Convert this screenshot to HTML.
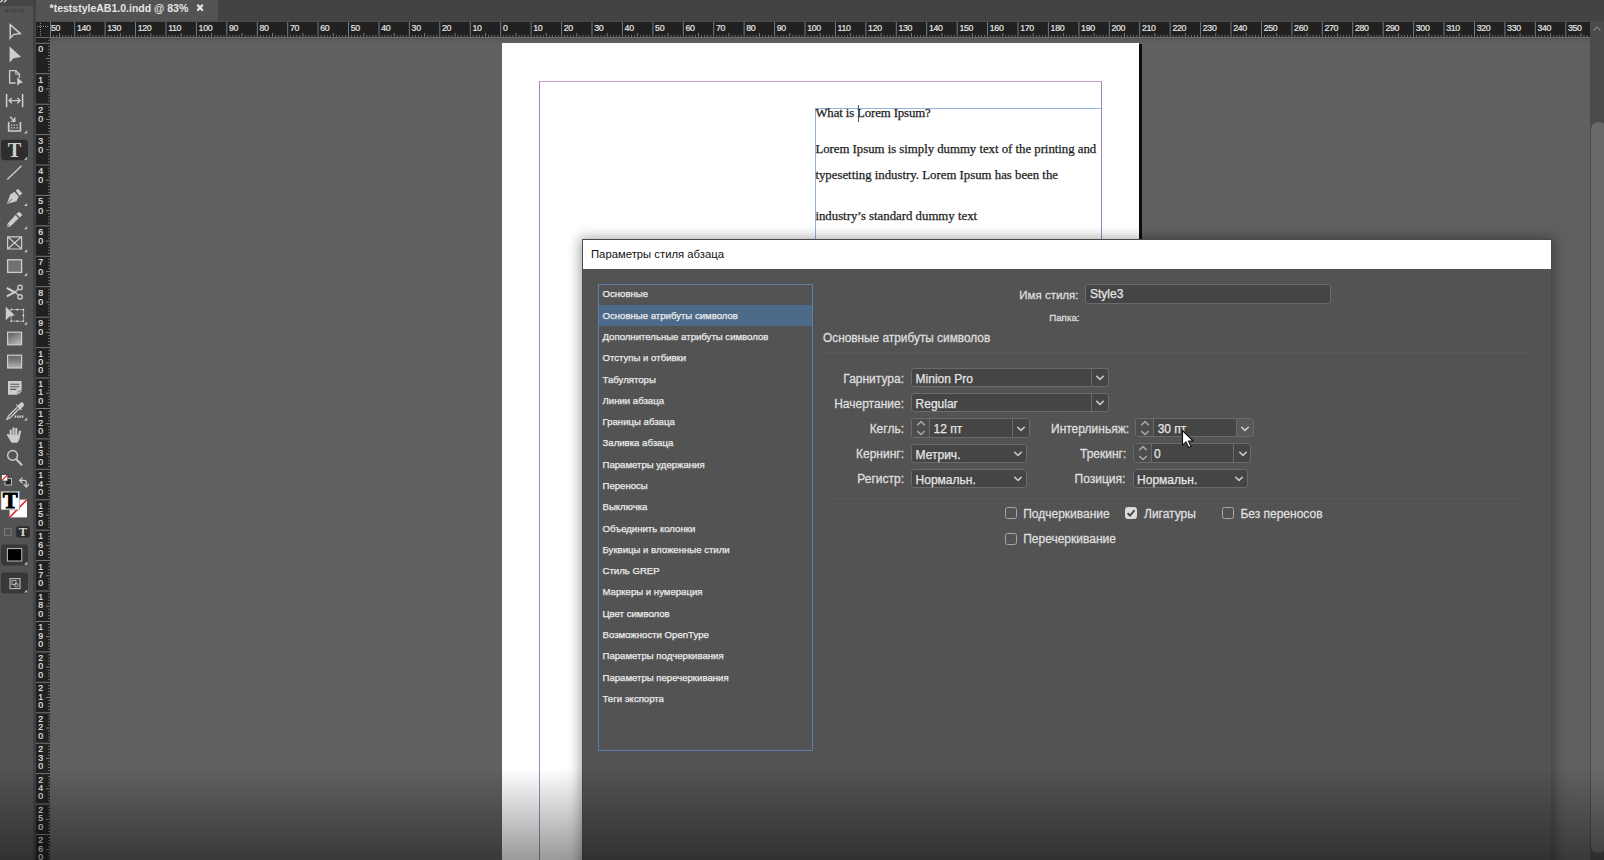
<!DOCTYPE html>
<html lang="ru">
<head>
<meta charset="utf-8">
<title>InDesign</title>
<style>
*{box-sizing:border-box}
html,body{margin:0;padding:0}
body{width:1604px;height:860px;position:relative;overflow:hidden;background:#606060;font-family:"Liberation Sans",sans-serif;color:#dcdcdc}
.abs{position:absolute}
#topbar{left:0;top:0;width:1604px;height:20.5px;background:#434343}
#topstrip{left:33px;top:20.5px;width:1571px;height:1.5px;background:#4b4b4b}
#tab{left:36px;top:0;width:182.4px;height:20.8px;background:#535353}
#tabtxt{left:49.6px;top:1.4px;font-weight:bold;font-size:10.5px;line-height:15px;color:#e4e4e4;white-space:nowrap}
#tabx{left:196.4px;top:.9px;font-weight:bold;font-size:12px;line-height:15px;color:#eee;-webkit-text-stroke:.5px #eee}
#tools{left:0;top:0;width:33px;height:860px;background:#535353}
#toolhead{left:0;top:0;width:33px;height:5.5px;background:#454545}
#toolsep{left:33px;top:0;width:3px;height:860px;background:#434343}
#hr{left:36px;top:22px;width:1554px;height:15px;background:#212121}
#hrline{left:36px;top:37px;width:1554px;height:1px;background:#6c6c6c}
#vr{left:36px;top:38px;width:14px;height:822px;background:#212121}
#rulers{left:0;top:0;width:1604px;height:860px}
#rulers text{font-family:"Liberation Sans",sans-serif;font-size:8.8px;fill:#e4e4e4;stroke:#e4e4e4;stroke-width:.2px;letter-spacing:-0.35px}
#sbar{left:1590px;top:22px;width:14px;height:838px;background:#4a4a4a}
#sthumb{left:1591.3px;top:122px;width:14.5px;height:731px;background:#696969;border-radius:7px}
#page{left:502px;top:43.3px;width:637.3px;height:817px;background:#fff}
#pageshadow{left:1139.3px;top:44px;width:3px;height:816px;background:#0d0d0d}
.mg{background:#cf96cf}
.fr{background:#93b2df}
.pt{font-family:"Liberation Serif",serif;font-size:12.8px;color:#1d1d1d;-webkit-text-stroke:.25px #1d1d1d;white-space:nowrap;line-height:16px}
#dlg{left:582px;top:239px;width:969.5px;height:640px;background:#535353;box-shadow:0 1px 12px 2px rgba(0,0,0,.36);border:1px solid #4a4a4a}
#dlgtitle{left:0;top:0;width:100%;height:29px;background:#fff}
#dlgtitle span{position:absolute;left:8px;top:6px;font-size:11.3px;line-height:16px;color:#111;white-space:nowrap}
#list{left:597.5px;top:283.5px;width:215.6px;height:467.6px;background:transparent;border:1.8px solid #5b7fa9}
.li{position:absolute;left:4px;font-size:9.6px;line-height:14px;color:#ececec;white-space:nowrap;-webkit-text-stroke:.25px #ececec}
#lisel{left:599px;top:304.6px;width:212.6px;height:21.4px;background:#4d6a89}
.lab{position:absolute;font-size:12px;line-height:16px;color:#dedede;white-space:nowrap;text-align:right;-webkit-text-stroke:.3px #dedede}
.fld{position:absolute;height:19px;background:#454545;border:1px solid #6a6a6a;border-radius:3px}
.fld span{position:absolute;left:3.6px;top:1.4px;font-size:12px;line-height:16px;color:#e6e6e6;white-space:nowrap;-webkit-text-stroke:.25px #e6e6e6}
.fld i{position:absolute;top:0;bottom:0;width:1px;background:#6a6a6a}
.seg{position:absolute;top:0;bottom:0;background:#4d4d4d}
.cb{position:absolute;width:12px;height:12px;border:1px solid #a6a6a6;border-radius:2.5px;background:transparent}
.cbl{position:absolute;font-size:12px;line-height:16px;color:#dedede;white-space:nowrap;-webkit-text-stroke:.3px #dedede}
.hrl{position:absolute;height:1px;background:#595959}
#fade{left:0;top:768px;width:1604px;height:92px;background:linear-gradient(to bottom,rgba(0,0,0,0) 0,rgba(0,0,0,.4) 100%)}
</style>
</head>
<body>
<!-- canvas -->
<div class="abs" id="page"></div>
<div class="abs" id="pageshadow"></div>
<!-- margin guides -->
<div class="abs mg" style="left:539px;top:81px;width:562.5px;height:1px"></div>
<div class="abs mg" style="left:538.7px;top:81px;width:1px;height:779px;background:#a086bd"></div>
<div class="abs mg" style="left:1100.6px;top:81px;width:1px;height:779px;background:#a086bd"></div>
<!-- text frame -->
<div class="abs fr" style="left:815.2px;top:108.2px;width:286px;height:1px"></div>
<div class="abs fr" style="left:815.2px;top:108.2px;width:1px;height:140px"></div>
<div class="abs pt" style="left:815.4px;top:105px;letter-spacing:-0.12px">What is Lorem Ipsum?</div>
<div class="abs" style="left:857.5px;top:105.4px;width:1.3px;height:17px;background:#555"></div>
<div class="abs pt" style="left:815.4px;top:140.5px;letter-spacing:-0.02px">Lorem Ipsum is simply dummy text of the printing and</div>
<div class="abs pt" style="left:815.4px;top:167px">typesetting industry. Lorem Ipsum has been the</div>
<div class="abs pt" style="left:815.4px;top:208.3px">industry’s standard dummy text</div>

<!--DIALOG_START-->
<div class="abs" id="dlg"><div class="abs" id="dlgtitle"><span>Параметры стиля абзаца</span></div></div>
<!-- category list -->
<div class="abs" id="list"></div>
<div class="abs" id="lisel"></div>
<div class="abs" id="litems" style="left:598.5px;top:0;width:214px;height:760px">
<div class="li" style="top:287.3px">Основные</div>
<div class="li" style="top:308.6px">Основные атрибуты символов</div>
<div class="li" style="top:329.9px">Дополнительные атрибуты символов</div>
<div class="li" style="top:351.2px">Отступы и отбивки</div>
<div class="li" style="top:372.5px">Табуляторы</div>
<div class="li" style="top:393.8px">Линии абзаца</div>
<div class="li" style="top:415.1px">Границы абзаца</div>
<div class="li" style="top:436.4px">Заливка абзаца</div>
<div class="li" style="top:457.7px">Параметры удержания</div>
<div class="li" style="top:479px">Переносы</div>
<div class="li" style="top:500.2px">Выключка</div>
<div class="li" style="top:521.5px">Объединить колонки</div>
<div class="li" style="top:542.8px">Буквицы и вложенные стили</div>
<div class="li" style="top:564.1px">Стиль GREP</div>
<div class="li" style="top:585.4px">Маркеры и нумерация</div>
<div class="li" style="top:606.7px">Цвет символов</div>
<div class="li" style="top:628px">Возможности OpenType</div>
<div class="li" style="top:649.3px">Параметры подчеркивания</div>
<div class="li" style="top:670.6px">Параметры перечеркивания</div>
<div class="li" style="top:691.9px">Теги экспорта</div>
</div>
<!-- style name -->
<div class="lab" style="left:978.5px;width:100px;top:286.6px;font-size:11.5px">Имя стиля:</div>
<div class="fld" style="left:1085px;top:284px;width:246.4px;height:19.5px"><span style="top:1.3px;left:4px">Style3</span></div>
<div class="lab" style="left:979.6px;width:100px;top:310.5px;font-size:9.8px;line-height:14px">Папка:</div>
<div class="lab" style="left:823px;top:330px;text-align:left;font-size:11.85px">Основные атрибуты символов</div>
<div class="hrl" style="left:823px;top:351.5px;width:707px"></div>
<!-- left column -->
<div class="lab" style="left:804px;width:100px;top:370.8px">Гарнитура:</div>
<div class="fld" style="left:911px;top:368px;width:198px;height:19.4px"><span style="top:1.8px">Minion Pro</span><i style="left:179px"></i><svg class="abs" style="left:183px;top:5.6px" width="10" height="7" viewBox="0 0 10 7"><path d="M1.3 0.9L5 4.4L8.7 0.9" fill="none" stroke="#c8c8c8" stroke-width="1.45"/></svg></div>
<div class="lab" style="left:804px;width:100px;top:395.9px">Начертание:</div>
<div class="fld" style="left:911px;top:393px;width:198px;height:19.4px"><span style="top:2px">Regular</span><i style="left:179px"></i><svg class="abs" style="left:183px;top:5.8px" width="10" height="7" viewBox="0 0 10 7"><path d="M1.3 0.9L5 4.4L8.7 0.9" fill="none" stroke="#c8c8c8" stroke-width="1.45"/></svg></div>
<div class="lab" style="left:804px;width:100px;top:421px">Кегль:</div>
<div class="fld" style="left:911px;top:418.2px;width:119px;height:19.5px"><div class="seg" style="left:0;width:17px;border-radius:2px 0 0 2px"></div><i style="left:17px"></i><svg class="abs" style="left:4px;top:1px" width="10" height="17" viewBox="0 0 10 17"><path d="M1.2 5.2L5 1.6L8.8 5.2M1.2 11L5 14.6L8.8 11" fill="none" stroke="#a9a9a9" stroke-width="1.45"/></svg><span style="left:21.6px;top:1.6px">12 пт</span><i style="left:100px"></i><svg class="abs" style="left:104px;top:6.5px" width="10" height="7" viewBox="0 0 10 7"><path d="M1.3 0.9L5 4.4L8.7 0.9" fill="none" stroke="#c8c8c8" stroke-width="1.45"/></svg></div>
<div class="lab" style="left:804px;width:100px;top:446.2px">Кернинг:</div>
<div class="fld" style="left:911px;top:443.8px;width:116px;height:19.5px"><span style="top:1.8px">Метрич.</span><svg class="abs" style="left:101px;top:6.4px" width="10" height="7" viewBox="0 0 10 7"><path d="M1.3 0.9L5 4.4L8.7 0.9" fill="none" stroke="#c8c8c8" stroke-width="1.45"/></svg></div>
<div class="lab" style="left:804px;width:100px;top:471.3px">Регистр:</div>
<div class="fld" style="left:911px;top:469px;width:116px;height:19.3px"><span style="top:1.6px">Нормальн.</span><svg class="abs" style="left:101px;top:6.2px" width="10" height="7" viewBox="0 0 10 7"><path d="M1.3 0.9L5 4.4L8.7 0.9" fill="none" stroke="#c8c8c8" stroke-width="1.45"/></svg></div>
<!-- right column -->
<div class="lab" style="left:1029px;width:100px;top:421.4px">Интерлиньяж:</div>
<div class="fld" style="left:1135.3px;top:418px;width:118.3px;height:19.4px"><div class="seg" style="left:0;width:17px;border-radius:2px 0 0 2px"></div><i style="left:17px"></i><svg class="abs" style="left:4px;top:1px" width="10" height="17" viewBox="0 0 10 17"><path d="M1.2 5.2L5 1.6L8.8 5.2M1.2 11L5 14.6L8.8 11" fill="none" stroke="#a9a9a9" stroke-width="1.45"/></svg><span style="left:21.4px;top:2.2px">30 пт</span><div class="seg" style="left:100px;right:0;background:#595959;border-radius:0 2px 2px 0"></div><i style="left:99.5px"></i><svg class="abs" style="left:104px;top:6.5px" width="10" height="7" viewBox="0 0 10 7"><path d="M1.3 0.9L5 4.4L8.7 0.9" fill="none" stroke="#c8c8c8" stroke-width="1.45"/></svg></div>
<div class="lab" style="left:1026.3px;width:100px;top:446.3px">Трекинг:</div>
<div class="fld" style="left:1132.5px;top:443.2px;width:118.3px;height:19.7px"><div class="seg" style="left:0;width:17px;border-radius:2px 0 0 2px"></div><i style="left:17px"></i><svg class="abs" style="left:4px;top:1px" width="10" height="17" viewBox="0 0 10 17"><path d="M1.2 5.2L5 1.6L8.8 5.2M1.2 11L5 14.6L8.8 11" fill="none" stroke="#a9a9a9" stroke-width="1.45"/></svg><span style="left:20.6px;top:1.7px">0</span><i style="left:99.6px"></i><svg class="abs" style="left:104.5px;top:6.5px" width="10" height="7" viewBox="0 0 10 7"><path d="M1.3 0.9L5 4.4L8.7 0.9" fill="none" stroke="#c8c8c8" stroke-width="1.45"/></svg></div>
<div class="lab" style="left:1025.4px;width:100px;top:471px">Позиция:</div>
<div class="fld" style="left:1132.5px;top:469.3px;width:115.5px;height:18.6px"><span>Нормальн.</span><svg class="abs" style="left:100.5px;top:6px" width="10" height="7" viewBox="0 0 10 7"><path d="M1.3 0.9L5 4.4L8.7 0.9" fill="none" stroke="#c8c8c8" stroke-width="1.45"/></svg></div>
<div class="hrl" style="left:832px;top:497.5px;width:690px"></div>
<!-- checkboxes -->
<div class="cb" style="left:1004.5px;top:507.4px"></div><div class="cbl" style="left:1023.2px;top:506px">Подчеркивание</div>
<div class="cb" style="left:1125.4px;top:507.4px;background:#dcdcdc;border-color:#dcdcdc"></div>
<svg class="abs" style="left:1125.4px;top:507.4px" width="12" height="12" viewBox="0 0 12 12"><path d="M2.6 6.2L5 8.7L9.5 3.2" fill="none" stroke="#3d3d3d" stroke-width="1.8"/></svg>
<div class="cbl" style="left:1144px;top:506px">Лигатуры</div>
<div class="cb" style="left:1222.2px;top:507.4px"></div><div class="cbl" style="left:1240.4px;top:506px">Без переносов</div>
<div class="cb" style="left:1004.5px;top:532.7px"></div><div class="cbl" style="left:1023.2px;top:531.3px">Перечеркивание</div>
<!-- mouse cursor -->
<svg class="abs" style="left:1181.3px;top:429px" width="14" height="20" viewBox="0 0 14 20"><path d="M1.5 1.5V16.2L5 12.9L7.6 18.6L10 17.5L7.4 12H12.2Z" fill="#fff" stroke="#111" stroke-width="1.1" stroke-linejoin="round"/></svg>
<!--DIALOG_END-->

<!-- chrome -->
<div class="abs" id="topbar"></div>
<div class="abs" id="topstrip"></div>
<div class="abs" id="tab"></div>
<div class="abs" id="tabtxt">*teststyleAB1.0.indd @ 83%</div>
<div class="abs" id="tabx">×</div>
<div class="abs" id="hr"></div>
<div class="abs" id="hrline"></div>
<div class="abs" id="vr"></div>
<div class="abs" style="left:50px;top:38px;width:1540px;height:4px;background:linear-gradient(to bottom,rgba(0,0,0,.09),rgba(0,0,0,.05) 60%,rgba(0,0,0,0))"></div>
<div class="abs" id="sbar"></div>
<div class="abs" id="sthumb"></div>
<svg class="abs" id="rulers" width="1604" height="860" viewBox="0 0 1604 860">
<g shape-rendering="auto">
<path d="M53.4 37V35M56.4 37V35M62.5 37V35M65.6 37V35M68.6 37V35M71.6 37V35M77.7 37V35M80.8 37V35M83.8 37V35M86.9 37V35M92.9 37V35M96.0 37V35M99.0 37V35M102.1 37V35M108.2 37V35M111.2 37V35M114.2 37V35M117.3 37V35M123.4 37V35M126.4 37V35M129.5 37V35M132.5 37V35M138.6 37V35M141.6 37V35M144.7 37V35M147.7 37V35M153.8 37V35M156.8 37V35M159.9 37V35M162.9 37V35M169.0 37V35M172.1 37V35M175.1 37V35M178.1 37V35M184.2 37V35M187.3 37V35M190.3 37V35M193.4 37V35M199.4 37V35M202.5 37V35M205.5 37V35M208.6 37V35M214.7 37V35M217.7 37V35M220.7 37V35M223.8 37V35M229.9 37V35M232.9 37V35M236.0 37V35M239.0 37V35M245.1 37V35M248.1 37V35M251.2 37V35M254.2 37V35M260.3 37V35M263.3 37V35M266.4 37V35M269.4 37V35M275.5 37V35M278.6 37V35M281.6 37V35M284.6 37V35M290.7 37V35M293.8 37V35M296.8 37V35M299.9 37V35M305.9 37V35M309.0 37V35M312.0 37V35M315.1 37V35M321.2 37V35M324.2 37V35M327.2 37V35M330.3 37V35M336.4 37V35M339.4 37V35M342.5 37V35M345.5 37V35M351.6 37V35M354.6 37V35M357.7 37V35M360.7 37V35M366.8 37V35M369.9 37V35M372.9 37V35M375.9 37V35M382.0 37V35M385.1 37V35M388.1 37V35M391.2 37V35M397.2 37V35M400.3 37V35M403.3 37V35M406.4 37V35M412.5 37V35M415.5 37V35M418.5 37V35M421.6 37V35M427.7 37V35M430.7 37V35M433.8 37V35M436.8 37V35M442.9 37V35M445.9 37V35M449.0 37V35M452.0 37V35M458.1 37V35M461.1 37V35M464.2 37V35M467.2 37V35M473.3 37V35M476.4 37V35M479.4 37V35M482.4 37V35M488.5 37V35M491.6 37V35M494.6 37V35M497.7 37V35M503.7 37V35M506.8 37V35M509.8 37V35M512.9 37V35M519.0 37V35M522.0 37V35M525.0 37V35M528.1 37V35M534.2 37V35M537.2 37V35M540.3 37V35M543.3 37V35M549.4 37V35M552.4 37V35M555.5 37V35M558.5 37V35M564.6 37V35M567.6 37V35M570.7 37V35M573.7 37V35M579.8 37V35M582.9 37V35M585.9 37V35M588.9 37V35M595.0 37V35M598.1 37V35M601.1 37V35M604.2 37V35M610.2 37V35M613.3 37V35M616.3 37V35M619.4 37V35M625.5 37V35M628.5 37V35M631.5 37V35M634.6 37V35M640.7 37V35M643.7 37V35M646.8 37V35M649.8 37V35M655.9 37V35M658.9 37V35M662.0 37V35M665.0 37V35M671.1 37V35M674.2 37V35M677.2 37V35M680.2 37V35M686.3 37V35M689.4 37V35M692.4 37V35M695.5 37V35M701.5 37V35M704.6 37V35M707.6 37V35M710.7 37V35M716.8 37V35M719.8 37V35M722.8 37V35M725.9 37V35M732.0 37V35M735.0 37V35M738.1 37V35M741.1 37V35M747.2 37V35M750.2 37V35M753.3 37V35M756.3 37V35M762.4 37V35M765.4 37V35M768.5 37V35M771.5 37V35M777.6 37V35M780.7 37V35M783.7 37V35M786.7 37V35M792.8 37V35M795.9 37V35M798.9 37V35M802.0 37V35M808.0 37V35M811.1 37V35M814.1 37V35M817.2 37V35M823.3 37V35M826.3 37V35M829.3 37V35M832.4 37V35M838.5 37V35M841.5 37V35M844.6 37V35M847.6 37V35M853.7 37V35M856.7 37V35M859.8 37V35M862.8 37V35M868.9 37V35M871.9 37V35M875.0 37V35M878.0 37V35M884.1 37V35M887.2 37V35M890.2 37V35M893.2 37V35M899.3 37V35M902.4 37V35M905.4 37V35M908.5 37V35M914.5 37V35M917.6 37V35M920.6 37V35M923.7 37V35M929.8 37V35M932.8 37V35M935.8 37V35M938.9 37V35M945.0 37V35M948.0 37V35M951.1 37V35M954.1 37V35M960.2 37V35M963.2 37V35M966.3 37V35M969.3 37V35M975.4 37V35M978.5 37V35M981.5 37V35M984.5 37V35M990.6 37V35M993.7 37V35M996.7 37V35M999.8 37V35M1005.8 37V35M1008.9 37V35M1011.9 37V35M1015.0 37V35M1021.1 37V35M1024.1 37V35M1027.1 37V35M1030.2 37V35M1036.3 37V35M1039.3 37V35M1042.4 37V35M1045.4 37V35M1051.5 37V35M1054.5 37V35M1057.6 37V35M1060.6 37V35M1066.7 37V35M1069.7 37V35M1072.8 37V35M1075.8 37V35M1081.9 37V35M1085.0 37V35M1088.0 37V35M1091.0 37V35M1097.1 37V35M1100.2 37V35M1103.2 37V35M1106.3 37V35M1112.3 37V35M1115.4 37V35M1118.4 37V35M1121.5 37V35M1127.6 37V35M1130.6 37V35M1133.6 37V35M1136.7 37V35M1142.8 37V35M1145.8 37V35M1148.9 37V35M1151.9 37V35M1158.0 37V35M1161.0 37V35M1164.1 37V35M1167.1 37V35M1173.2 37V35M1176.2 37V35M1179.3 37V35M1182.3 37V35M1188.4 37V35M1191.5 37V35M1194.5 37V35M1197.5 37V35M1203.6 37V35M1206.7 37V35M1209.7 37V35M1212.8 37V35M1218.8 37V35M1221.9 37V35M1224.9 37V35M1228.0 37V35M1234.1 37V35M1237.1 37V35M1240.1 37V35M1243.2 37V35M1249.3 37V35M1252.3 37V35M1255.4 37V35M1258.4 37V35M1264.5 37V35M1267.5 37V35M1270.6 37V35M1273.6 37V35M1279.7 37V35M1282.8 37V35M1285.8 37V35M1288.8 37V35M1294.9 37V35M1298.0 37V35M1301.0 37V35M1304.1 37V35M1310.1 37V35M1313.2 37V35M1316.2 37V35M1319.3 37V35M1325.4 37V35M1328.4 37V35M1331.4 37V35M1334.5 37V35M1340.6 37V35M1343.6 37V35M1346.7 37V35M1349.7 37V35M1355.8 37V35M1358.8 37V35M1361.9 37V35M1364.9 37V35M1371.0 37V35M1374.0 37V35M1377.1 37V35M1380.1 37V35M1386.2 37V35M1389.3 37V35M1392.3 37V35M1395.3 37V35M1401.4 37V35M1404.5 37V35M1407.5 37V35M1410.6 37V35M1416.6 37V35M1419.7 37V35M1422.7 37V35M1425.8 37V35M1431.9 37V35M1434.9 37V35M1437.9 37V35M1441.0 37V35M1447.1 37V35M1450.1 37V35M1453.2 37V35M1456.2 37V35M1462.3 37V35M1465.3 37V35M1468.4 37V35M1471.4 37V35M1477.5 37V35M1480.5 37V35M1483.6 37V35M1486.6 37V35M1492.7 37V35M1495.8 37V35M1498.8 37V35M1501.8 37V35M1507.9 37V35M1511.0 37V35M1514.0 37V35M1517.1 37V35M1523.1 37V35M1526.2 37V35M1529.2 37V35M1532.3 37V35M1538.4 37V35M1541.4 37V35M1544.4 37V35M1547.5 37V35M1553.6 37V35M1556.6 37V35M1559.7 37V35M1562.7 37V35M1568.8 37V35M1571.8 37V35M1574.9 37V35M1577.9 37V35M1584.0 37V35M1587.1 37V35" stroke="#6c6c6c" stroke-width="1"/>
<path d="M59.5 37V33M89.9 37V33M120.3 37V33M150.8 37V33M181.2 37V33M211.6 37V33M242.0 37V33M272.5 37V33M302.9 37V33M333.3 37V33M363.8 37V33M394.2 37V33M424.6 37V33M455.1 37V33M485.5 37V33M515.9 37V33M546.3 37V33M576.8 37V33M607.2 37V33M637.6 37V33M668.1 37V33M698.5 37V33M728.9 37V33M759.4 37V33M789.8 37V33M820.2 37V33M850.6 37V33M881.1 37V33M911.5 37V33M941.9 37V33M972.4 37V33M1002.8 37V33M1033.2 37V33M1063.7 37V33M1094.1 37V33M1124.5 37V33M1154.9 37V33M1185.4 37V33M1215.8 37V33M1246.2 37V33M1276.7 37V33M1307.1 37V33M1337.5 37V33M1368.0 37V33M1398.4 37V33M1428.8 37V33M1459.2 37V33M1489.7 37V33M1520.1 37V33M1550.5 37V33M1581.0 37V33" stroke="#7a7a7a" stroke-width="1"/>
<path d="M74.7 37V22M105.1 37V22M135.5 37V22M166.0 37V22M196.4 37V22M226.8 37V22M257.3 37V22M287.7 37V22M318.1 37V22M348.5 37V22M379.0 37V22M409.4 37V22M439.8 37V22M470.3 37V22M500.7 37V22M531.1 37V22M561.6 37V22M592.0 37V22M622.4 37V22M652.9 37V22M683.3 37V22M713.7 37V22M744.1 37V22M774.6 37V22M805.0 37V22M835.4 37V22M865.9 37V22M896.3 37V22M926.7 37V22M957.2 37V22M987.6 37V22M1018.0 37V22M1048.4 37V22M1078.9 37V22M1109.3 37V22M1139.7 37V22M1170.2 37V22M1200.6 37V22M1231.0 37V22M1261.5 37V22M1291.9 37V22M1322.3 37V22M1352.7 37V22M1383.2 37V22M1413.6 37V22M1444.0 37V22M1474.5 37V22M1504.9 37V22M1535.3 37V22M1565.8 37V22" stroke="#7a7a7a" stroke-width="1"/>
<text x="46.4" y="30.9">150</text>
<text x="76.9" y="30.9">140</text>
<text x="107.3" y="30.9">130</text>
<text x="137.7" y="30.9">120</text>
<text x="168.2" y="30.9">110</text>
<text x="198.6" y="30.9">100</text>
<text x="229.0" y="30.9">90</text>
<text x="259.5" y="30.9">80</text>
<text x="289.9" y="30.9">70</text>
<text x="320.3" y="30.9">60</text>
<text x="350.7" y="30.9">50</text>
<text x="381.2" y="30.9">40</text>
<text x="411.6" y="30.9">30</text>
<text x="442.0" y="30.9">20</text>
<text x="472.5" y="30.9">10</text>
<text x="502.9" y="30.9">0</text>
<text x="533.3" y="30.9">10</text>
<text x="563.8" y="30.9">20</text>
<text x="594.2" y="30.9">30</text>
<text x="624.6" y="30.9">40</text>
<text x="655.1" y="30.9">50</text>
<text x="685.5" y="30.9">60</text>
<text x="715.9" y="30.9">70</text>
<text x="746.3" y="30.9">80</text>
<text x="776.8" y="30.9">90</text>
<text x="807.2" y="30.9">100</text>
<text x="837.6" y="30.9">110</text>
<text x="868.1" y="30.9">120</text>
<text x="898.5" y="30.9">130</text>
<text x="928.9" y="30.9">140</text>
<text x="959.4" y="30.9">150</text>
<text x="989.8" y="30.9">160</text>
<text x="1020.2" y="30.9">170</text>
<text x="1050.6" y="30.9">180</text>
<text x="1081.1" y="30.9">190</text>
<text x="1111.5" y="30.9">200</text>
<text x="1141.9" y="30.9">210</text>
<text x="1172.4" y="30.9">220</text>
<text x="1202.8" y="30.9">230</text>
<text x="1233.2" y="30.9">240</text>
<text x="1263.7" y="30.9">250</text>
<text x="1294.1" y="30.9">260</text>
<text x="1324.5" y="30.9">270</text>
<text x="1354.9" y="30.9">280</text>
<text x="1385.4" y="30.9">290</text>
<text x="1415.8" y="30.9">300</text>
<text x="1446.2" y="30.9">310</text>
<text x="1476.7" y="30.9">320</text>
<text x="1507.1" y="30.9">330</text>
<text x="1537.5" y="30.9">340</text>
<text x="1568.0" y="30.9">350</text>
<path d="M50 40.3H48M50 46.3H48M50 49.4H48M50 52.4H48M50 55.5H48M50 61.6H48M50 64.6H48M50 67.6H48M50 70.7H48M50 76.8H48M50 79.8H48M50 82.9H48M50 85.9H48M50 92.0H48M50 95.0H48M50 98.1H48M50 101.1H48M50 107.2H48M50 110.2H48M50 113.3H48M50 116.3H48M50 122.4H48M50 125.5H48M50 128.5H48M50 131.5H48M50 137.6H48M50 140.7H48M50 143.7H48M50 146.8H48M50 152.8H48M50 155.9H48M50 158.9H48M50 162.0H48M50 168.1H48M50 171.1H48M50 174.1H48M50 177.2H48M50 183.3H48M50 186.3H48M50 189.4H48M50 192.4H48M50 198.5H48M50 201.5H48M50 204.6H48M50 207.6H48M50 213.7H48M50 216.8H48M50 219.8H48M50 222.8H48M50 228.9H48M50 232.0H48M50 235.0H48M50 238.1H48M50 244.1H48M50 247.2H48M50 250.2H48M50 253.3H48M50 259.4H48M50 262.4H48M50 265.4H48M50 268.5H48M50 274.6H48M50 277.6H48M50 280.7H48M50 283.7H48M50 289.8H48M50 292.8H48M50 295.9H48M50 298.9H48M50 305.0H48M50 308.0H48M50 311.1H48M50 314.1H48M50 320.2H48M50 323.3H48M50 326.3H48M50 329.3H48M50 335.4H48M50 338.5H48M50 341.5H48M50 344.6H48M50 350.6H48M50 353.7H48M50 356.7H48M50 359.8H48M50 365.9H48M50 368.9H48M50 371.9H48M50 375.0H48M50 381.1H48M50 384.1H48M50 387.2H48M50 390.2H48M50 396.3H48M50 399.3H48M50 402.4H48M50 405.4H48M50 411.5H48M50 414.5H48M50 417.6H48M50 420.6H48M50 426.7H48M50 429.8H48M50 432.8H48M50 435.8H48M50 441.9H48M50 445.0H48M50 448.0H48M50 451.1H48M50 457.1H48M50 460.2H48M50 463.2H48M50 466.3H48M50 472.4H48M50 475.4H48M50 478.4H48M50 481.5H48M50 487.6H48M50 490.6H48M50 493.7H48M50 496.7H48M50 502.8H48M50 505.8H48M50 508.9H48M50 511.9H48M50 518.0H48M50 521.1H48M50 524.1H48M50 527.1H48M50 533.2H48M50 536.3H48M50 539.3H48M50 542.4H48M50 548.4H48M50 551.5H48M50 554.5H48M50 557.6H48M50 563.7H48M50 566.7H48M50 569.7H48M50 572.8H48M50 578.9H48M50 581.9H48M50 585.0H48M50 588.0H48M50 594.1H48M50 597.1H48M50 600.2H48M50 603.2H48M50 609.3H48M50 612.3H48M50 615.4H48M50 618.4H48M50 624.5H48M50 627.6H48M50 630.6H48M50 633.6H48M50 639.7H48M50 642.8H48M50 645.8H48M50 648.9H48M50 654.9H48M50 658.0H48M50 661.0H48M50 664.1H48M50 670.2H48M50 673.2H48M50 676.2H48M50 679.3H48M50 685.4H48M50 688.4H48M50 691.5H48M50 694.5H48M50 700.6H48M50 703.6H48M50 706.7H48M50 709.7H48M50 715.8H48M50 718.8H48M50 721.9H48M50 724.9H48M50 731.0H48M50 734.1H48M50 737.1H48M50 740.1H48M50 746.2H48M50 749.3H48M50 752.3H48M50 755.4H48M50 761.4H48M50 764.5H48M50 767.5H48M50 770.6H48M50 776.7H48M50 779.7H48M50 782.7H48M50 785.8H48M50 791.9H48M50 794.9H48M50 798.0H48M50 801.0H48M50 807.1H48M50 810.1H48M50 813.2H48M50 816.2H48M50 822.3H48M50 825.4H48M50 828.4H48M50 831.4H48M50 837.5H48M50 840.6H48M50 843.6H48M50 846.7H48M50 852.7H48M50 855.8H48M50 858.8H48M50 861.9H48" stroke="#6c6c6c" stroke-width="1"/>
<path d="M50 58.5H46M50 88.9H46M50 119.4H46M50 149.8H46M50 180.2H46M50 210.7H46M50 241.1H46M50 271.5H46M50 302.0H46M50 332.4H46M50 362.8H46M50 393.2H46M50 423.7H46M50 454.1H46M50 484.5H46M50 515.0H46M50 545.4H46M50 575.8H46M50 606.3H46M50 636.7H46M50 667.1H46M50 697.5H46M50 728.0H46M50 758.4H46M50 788.8H46M50 819.3H46M50 849.7H46" stroke="#7a7a7a" stroke-width="1"/>
<path d="M50 43.3H36M50 73.7H36M50 104.2H36M50 134.6H36M50 165.0H36M50 195.4H36M50 225.9H36M50 256.3H36M50 286.7H36M50 317.2H36M50 347.6H36M50 378.0H36M50 408.5H36M50 438.9H36M50 469.3H36M50 499.8H36M50 530.2H36M50 560.6H36M50 591.0H36M50 621.5H36M50 651.9H36M50 682.3H36M50 712.8H36M50 743.2H36M50 773.6H36M50 804.0H36M50 834.5H36" stroke="#7a7a7a" stroke-width="1"/>
<text x="40.6" y="52.2" text-anchor="middle">0</text>
<text x="40.6" y="82.6" text-anchor="middle">1</text>
<text x="40.6" y="91.9" text-anchor="middle">0</text>
<text x="40.6" y="113.1" text-anchor="middle">2</text>
<text x="40.6" y="122.4" text-anchor="middle">0</text>
<text x="40.6" y="143.5" text-anchor="middle">3</text>
<text x="40.6" y="152.8" text-anchor="middle">0</text>
<text x="40.6" y="173.9" text-anchor="middle">4</text>
<text x="40.6" y="183.2" text-anchor="middle">0</text>
<text x="40.6" y="204.3" text-anchor="middle">5</text>
<text x="40.6" y="213.7" text-anchor="middle">0</text>
<text x="40.6" y="234.8" text-anchor="middle">6</text>
<text x="40.6" y="244.1" text-anchor="middle">0</text>
<text x="40.6" y="265.2" text-anchor="middle">7</text>
<text x="40.6" y="274.5" text-anchor="middle">0</text>
<text x="40.6" y="295.6" text-anchor="middle">8</text>
<text x="40.6" y="304.9" text-anchor="middle">0</text>
<text x="40.6" y="326.1" text-anchor="middle">9</text>
<text x="40.6" y="335.4" text-anchor="middle">0</text>
<text x="40.6" y="356.5" text-anchor="middle">1</text>
<text x="40.6" y="364.9" text-anchor="middle">0</text>
<text x="40.6" y="373.3" text-anchor="middle">0</text>
<text x="40.6" y="386.9" text-anchor="middle">1</text>
<text x="40.6" y="395.3" text-anchor="middle">1</text>
<text x="40.6" y="403.7" text-anchor="middle">0</text>
<text x="40.6" y="417.4" text-anchor="middle">1</text>
<text x="40.6" y="425.8" text-anchor="middle">2</text>
<text x="40.6" y="434.2" text-anchor="middle">0</text>
<text x="40.6" y="447.8" text-anchor="middle">1</text>
<text x="40.6" y="456.2" text-anchor="middle">3</text>
<text x="40.6" y="464.6" text-anchor="middle">0</text>
<text x="40.6" y="478.2" text-anchor="middle">1</text>
<text x="40.6" y="486.6" text-anchor="middle">4</text>
<text x="40.6" y="495.0" text-anchor="middle">0</text>
<text x="40.6" y="508.7" text-anchor="middle">1</text>
<text x="40.6" y="517.1" text-anchor="middle">5</text>
<text x="40.6" y="525.5" text-anchor="middle">0</text>
<text x="40.6" y="539.1" text-anchor="middle">1</text>
<text x="40.6" y="547.5" text-anchor="middle">6</text>
<text x="40.6" y="555.9" text-anchor="middle">0</text>
<text x="40.6" y="569.5" text-anchor="middle">1</text>
<text x="40.6" y="577.9" text-anchor="middle">7</text>
<text x="40.6" y="586.3" text-anchor="middle">0</text>
<text x="40.6" y="599.9" text-anchor="middle">1</text>
<text x="40.6" y="608.3" text-anchor="middle">8</text>
<text x="40.6" y="616.7" text-anchor="middle">0</text>
<text x="40.6" y="630.4" text-anchor="middle">1</text>
<text x="40.6" y="638.8" text-anchor="middle">9</text>
<text x="40.6" y="647.2" text-anchor="middle">0</text>
<text x="40.6" y="660.8" text-anchor="middle">2</text>
<text x="40.6" y="669.2" text-anchor="middle">0</text>
<text x="40.6" y="677.6" text-anchor="middle">0</text>
<text x="40.6" y="691.2" text-anchor="middle">2</text>
<text x="40.6" y="699.6" text-anchor="middle">1</text>
<text x="40.6" y="708.0" text-anchor="middle">0</text>
<text x="40.6" y="721.7" text-anchor="middle">2</text>
<text x="40.6" y="730.1" text-anchor="middle">2</text>
<text x="40.6" y="738.5" text-anchor="middle">0</text>
<text x="40.6" y="752.1" text-anchor="middle">2</text>
<text x="40.6" y="760.5" text-anchor="middle">3</text>
<text x="40.6" y="768.9" text-anchor="middle">0</text>
<text x="40.6" y="782.5" text-anchor="middle">2</text>
<text x="40.6" y="790.9" text-anchor="middle">4</text>
<text x="40.6" y="799.3" text-anchor="middle">0</text>
<text x="40.6" y="812.9" text-anchor="middle">2</text>
<text x="40.6" y="821.3" text-anchor="middle">5</text>
<text x="40.6" y="829.7" text-anchor="middle">0</text>
<text x="40.6" y="843.4" text-anchor="middle">2</text>
<text x="40.6" y="851.8" text-anchor="middle">6</text>
<text x="40.6" y="860.2" text-anchor="middle">0</text>
<text x="40.6" y="873.8" text-anchor="middle">2</text>
<text x="40.6" y="882.2" text-anchor="middle">7</text>
<text x="40.6" y="890.6" text-anchor="middle">0</text>
</g>
<rect x="36" y="22" width="14.4" height="15" fill="#212121"/>
<!-- origin crosshair -->
<path d="M50.5 22V37" stroke="#7a7a7a" stroke-width="1"/>
<path d="M37 26.5H48M40.5 23V36" stroke="#858585" stroke-width="1" stroke-dasharray="1 1" fill="none"/>
<!-- scrollbar arrow -->
<path d="M1593.5 30.5L1597 27L1600.5 30.5" stroke="#7f7f7f" stroke-width="1.1" fill="none"/>
</svg>
<div class="abs" id="toolsep"></div>
<div class="abs" id="tools"></div>
<div class="abs" id="toolhead"></div>
<!--TOOLS_START-->
<svg class="abs" id="toolsvg" style="left:0;top:0" width="36" height="600" viewBox="0 0 36 600">
<g fill="none" stroke="#cdcdcd" stroke-width="1.4" stroke-linejoin="miter">
<!-- collapse chevrons -->
<path d="M0.3 -2L2.4 0.2L0.3 2.4M4 -2L6.1 0.2L4 2.4" stroke="#dadada" stroke-width="1.3"/>
<!-- gripper -->
<path d="M5.5 9V12.5M7.5 9V12.5M9.5 9V12.5M11.5 9V12.5M13.5 9V12.5M15.5 9V12.5M17.5 9V12.5M19.5 9V12.5M21.5 9V12.5M23.5 9V12.5" stroke="#414141" stroke-width="1"/>
<!-- selection -->
<path d="M10.2 24.6V38L13.4 34.6L20.3 33.6Z" stroke-width="1.5"/>
<!-- direct selection -->
<path d="M9.6 46.6V62.6L13.6 58.2L21.2 57Z" fill="#cdcdcd" stroke="none"/>
<!-- page tool -->
<path d="M15.5 83H9.6V70.6H15.8L19.4 74.2V78" stroke-width="1.3"/><path d="M15.8 70.6V74.2H19.4" stroke-width="1"/>
<path d="M17.2 77.6V85.8L19.4 83.4L23 82.6Z" fill="#cdcdcd" stroke="none"/>
<!-- gap tool -->
<path d="M6.6 94V107.2M22.6 94V107.2" stroke-width="1.5"/><path d="M9 100.6H20.2M11.8 97.9L9.1 100.6L11.8 103.3M17.4 97.9L20.1 100.6L17.4 103.3" stroke-width="1.3"/>
<!-- content collector -->
<path d="M8.7 122V131H20.4V122" stroke-width="1.7"/><path d="M10.2 116.8L14.6 121.2M14.8 117.4V121.4H10.8" stroke-width="1.4"/>
<path d="M10.9 125.2H18.4M10.9 127.8H18.4" stroke-width="1.3" stroke-dasharray="1.4 1.3"/>
<!-- type tool -->
<rect x="1.1" y="139.8" width="26.8" height="20.5" rx="3" fill="#2d2d2d" stroke="none"/>
<!-- line -->
<path d="M7.3 179.6L21.3 166.1" stroke-width="1.4"/>
<!-- pen -->
<path d="M15.6 190.7L18.1 188.7L22.3 193.5L19.7 195.7Z" fill="#cdcdcd" stroke="none"/>
<path d="M14.4 191.8L18.7 196.6L16.4 201.3L6.8 204L10.2 194.4Z" fill="#cdcdcd" stroke="none"/>
<path d="M7.4 203.4L12 199" stroke="#555" stroke-width="0.9"/>
<!-- pencil -->
<path d="M16.2 214.1L19.3 211.7L22.4 214.9L19.7 217.5Z" fill="#cdcdcd" stroke="none"/>
<path d="M15.4 215L18.7 218.3L10.3 226.4L6.6 227.6L7.8 223.6Z" fill="#cdcdcd" stroke="none"/>
<path d="M7.2 226.9L9.2 224.8" stroke="#555" stroke-width="1"/>
<!-- rectangle frame -->
<path d="M7.6 236.8H21.6V249H7.6ZM7.6 236.8L21.6 249M21.6 236.8L7.6 249" stroke-width="1.2"/>
<!-- rectangle -->
<rect x="7.6" y="259.8" width="14" height="12.6" fill="#717171" stroke-width="1.3"/>
<!-- scissors -->
<circle cx="20.1" cy="287.4" r="2.2" stroke-width="1.3"/><circle cx="20.1" cy="296.8" r="2.2" stroke-width="1.3"/>
<path d="M6.8 288L15.6 292.6M6.8 296.4L15.6 291.6" stroke-width="2.1"/><path d="M15 292L18.6 295.4M15 292.2L18.6 288.8" stroke-width="1.3"/>
<!-- free transform -->
<path d="M5.8 306.8V320.2L9.6 316.6L14.8 315.3Z" fill="#cdcdcd" stroke="none"/>
<path d="M11.2 309.6H23.4V321.2H11.2V316" stroke="#b0b0b0" stroke-width="0.9"/>
<path d="M10.4 309.6H12M16.5 309.6H18.1M22.6 309.6H24.2M22.6 315.4H24.2M22.6 321.2H24.2M16.5 321.2H18.1M10.4 321.2H12" stroke="#dcdcdc" stroke-width="1.6"/>
<!-- gradient swatch -->
<rect x="7.6" y="332.2" width="14" height="12.6" fill="url(#gsw)" stroke-width="1.2"/>
<!-- gradient feather -->
<rect x="7.6" y="355.2" width="14" height="12.8" fill="url(#gfe)" stroke-width="1.2"/>
<!-- note -->
<path d="M8 381H21.6V391.2L18.2 394.8H8Z" fill="#cdcdcd" stroke="none"/>
<path d="M10.2 384.2H19.4M10.2 386.8H19.4M10.2 389.4H16.4" stroke="#555" stroke-width="1.1"/>
<path d="M18 391H21.6L18 394.8Z" fill="#e8e8e8" stroke="#555" stroke-width="0.7"/>
<!-- eyedropper -->
<path d="M17.2 407.2L8.6 415.8L7 419.2L10.2 417.6L18.8 409" stroke-width="1.3"/>
<path d="M16.2 404.6L21.4 409.8M18 406.4L20.4 403.6Q22 402.4 23 403.6Q24 405 22.8 406.2L20 409Z" fill="#cdcdcd" stroke-width="1.2"/>
<path d="M14.6 416.6H24" stroke-width="2.2" stroke-dasharray="1.6 0.8"/>
<!-- hand -->
<path d="M9.8 435.4H19.6L18.8 439.6L17.4 442.2H11.6L9.8 438.8Z" fill="#cdcdcd" stroke="#cdcdcd" stroke-width="1" stroke-linejoin="round"/>
<path d="M10.7 436V430.6M13.5 435V428.2M16.3 435V428.8M18.9 436.4L20 431.6M11.2 439.6L7.9 434.9" stroke-width="2.1" stroke-linecap="round"/>
<!-- zoom -->
<circle cx="12.6" cy="455.4" r="4.9" stroke-width="1.4"/><path d="M16.2 459.2L22 465.2" stroke-width="2"/>
<!-- default fill/stroke -->
<rect x="5" y="478.6" width="6.4" height="6.4" fill="#222" stroke="#cdcdcd" stroke-width="0.9"/>
<rect x="1.4" y="474.6" width="6.4" height="6.4" fill="#fff" stroke="#333" stroke-width="0.7"/>
<path d="M1.8 480.6L7.4 475" stroke="#e02020" stroke-width="1.1"/>
<!-- swap -->
<path d="M20.2 480.4H24.6Q26.2 480.4 26.2 482V486.4" stroke-width="1.3"/>
<path d="M22.4 477.8L19.6 480.4L22.4 483M23.6 484.2L26.2 487L28.8 484.2" stroke-width="1.2"/>
<!-- stroke box -->
<rect x="9.6" y="499.6" width="17.4" height="17.8" fill="#fff" stroke="none"/>
<path d="M9.8 517.2L26.8 499.8" stroke="#e32222" stroke-width="1.6"/>
<!-- fill box -->
<rect x="1" y="491.3" width="18.4" height="18.5" fill="#fff" stroke="#8a8a8a" stroke-width="0.6"/>
<!-- container/text formatting -->
<rect x="4.4" y="528.8" width="6.8" height="6.8" stroke="#7a7a7a" stroke-width="1"/>
<rect x="16.2" y="526.2" width="13.6" height="11.4" rx="2.2" fill="#2b2b2b" stroke="none"/>
<!-- apply color -->
<rect x="1" y="544.5" width="27" height="21" rx="3.2" fill="#383838" stroke="none"/>
<rect x="7.4" y="548.6" width="14.4" height="12.4" fill="#000" stroke="#bdbdbd" stroke-width="1"/>
<!-- view mode -->
<rect x="1" y="572.5" width="27" height="21" rx="3.2" fill="#383838" stroke="none"/>
<rect x="10" y="578.6" width="10" height="10" stroke="#bdbdbd" stroke-width="1.1"/>
<rect x="12" y="580.6" width="4" height="4" stroke="#bdbdbd" stroke-width="0.9"/><circle cx="16.2" cy="585" r="2" stroke="#bdbdbd" stroke-width="0.9"/>
</g>
<!-- flyout triangles -->
<g fill="#c4c4c4">
<path d="M27.1 130.5V133.6H24Z"/><path d="M27.1 156.7V159.8H24Z"/><path d="M27.1 203.0V206.1H24Z"/><path d="M27.1 226.2V229.3H24Z"/>
<path d="M27.1 249.2V252.3H24Z"/><path d="M27.1 272.8V275.9H24Z"/><path d="M27.1 321.7V324.8H24Z"/><path d="M27.1 417.4V420.5H24Z"/>
<path d="M27.2 561.5V564.7H24Z"/><path d="M27.2 589.4V592.6H24Z"/>
</g>
<defs>
<linearGradient id="gsw" x1="0" y1="0" x2="0.6" y2="1"><stop offset="0" stop-color="#555"/><stop offset="1" stop-color="#b4b4b4"/></linearGradient>
<linearGradient id="gfe" x1="0" y1="0" x2="0" y2="1"><stop offset="0" stop-color="#666"/><stop offset="0.4" stop-color="#7a7a7a"/><stop offset="1" stop-color="#b4b4b4"/></linearGradient>
</defs>
<text x="14.5" y="156.9" text-anchor="middle" font-family="Liberation Serif, serif" font-weight="bold" font-size="20.2" fill="#cfcfcf">T</text>
<text x="10.2" y="508.4" text-anchor="middle" font-family="Liberation Serif, serif" font-weight="bold" font-size="22.5" fill="#000" stroke="#000" stroke-width="0.9">T</text>
<text x="23" y="536.2" text-anchor="middle" font-family="Liberation Serif, serif" font-weight="bold" font-size="12.5" fill="#d8d8d8">T</text>
</svg>
<!--TOOLS_END-->

<div class="abs" id="fade"></div>
</body>
</html>
